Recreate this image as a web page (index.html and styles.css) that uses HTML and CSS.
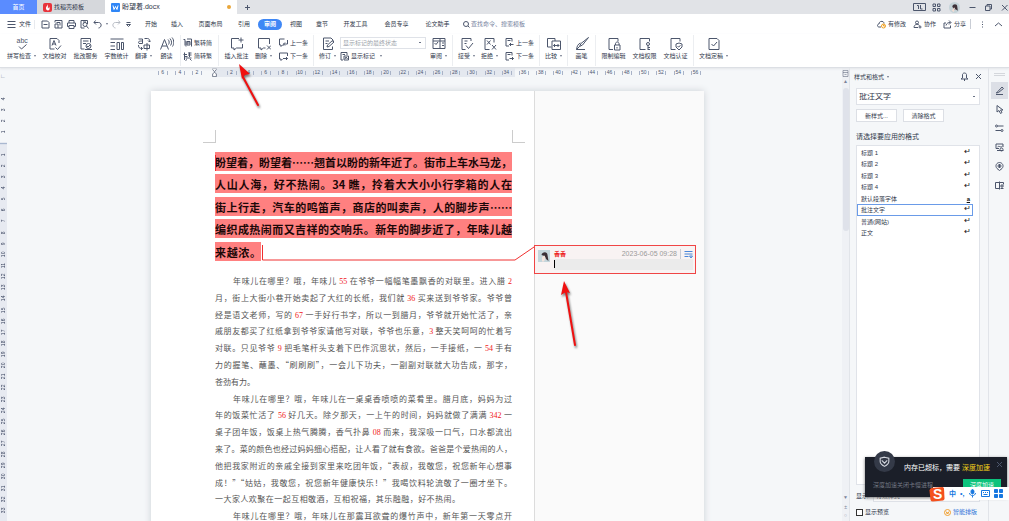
FILE: index.html
```html
<!DOCTYPE html>
<html>
<head>
<meta charset="utf-8">
<title>盼望着.docx</title>
<link rel="stylesheet" href="styles.css">
</head>
<body>
<div class="app">
  <header class="tabs">
    <button class="tab tab-home">首页</button>
    <button class="tab tab-store"><svg class="i9" viewBox="0 0 18 18"><rect width="18" height="18" rx="4" fill="#e8333b"/><path d="M9 2c1 3-2 4-3 7-1 4 2 6 4 6 4-1 4-5 2-8 0 2-1 3-2 4-1-3 1-5-1-9z" fill="#fff"/></svg>找稻壳模板</button>
    <button class="tab tab-doc"><svg class="i9" viewBox="0 0 18 18"><rect width="18" height="18" rx="2" fill="#2f86f6"/><path d="M4 5l2 8 3-6 3 6 2-8" fill="none" stroke="#fff" stroke-width="2"/></svg><span>盼望着.docx</span><i class="dot"></i></button>
    <button class="tab-add" aria-label="新建"><svg class="i7" viewBox="0 0 14 14"><path d="M7 2v10M2 7h10"/></svg></button>
    <div class="win">
      <svg class="i13" viewBox="0 0 26 16"><path d="M1 1h24v14H1zM8 5h3v7M15 4v8h4"/></svg>
      <svg class="i9" viewBox="0 0 18 18"><path d="M2 2h5v5H2zM11 2h5v5h-5zM2 11h5v5H2zM11 11h5v5h-5z"/></svg>
      <svg class="i11" viewBox="0 0 20 20"><circle cx="10" cy="10" r="10" fill="#c5d3d8" stroke="none"/><path d="M6 8c1-5 9-5 9 0l1 8-4-3-3 1z" fill="#3d3038" stroke="none"/><path d="M5 16l4-6 2 1-2 7z" fill="#f2dcd3" stroke="none"/></svg>
      <svg class="i7" viewBox="0 0 14 14"><path d="M1 7h12"/></svg>
      <svg class="i7" viewBox="0 0 14 14"><path d="M1 4h9v9H1zM4 4V1h9v9h-3"/></svg>
      <svg class="i7" viewBox="0 0 14 14"><path d="M2 2l11 11M13 2L2 13"/></svg>
    </div>
  </header>

  <nav class="menu">
    <button class="file"><svg class="i9" viewBox="0 0 18 18"><path d="M1 3h16M1 9h16M1 15h16"/></svg>文件</button>
    <div class="quick">
      <svg class="i9" viewBox="0 0 18 18"><path d="M2 2h11l3 3v11H2zM5 9h8"/></svg>
      <svg class="i9" viewBox="0 0 18 18"><path d="M2 5V1h14v15H8M5 5h7v6M2 8h6v8H2z"/></svg>
      <svg class="i9" viewBox="0 0 18 18"><path d="M4 6V1h10v5M4 13H1V6h16v7h-3M4 11h10v6H4z"/></svg>
      <svg class="i9" viewBox="0 0 18 18"><path d="M15 8V1H2v15h7M6 4h6"/><circle cx="10" cy="9" r="4"/><path d="M13 12l4 5"/></svg>
      <svg class="i9" viewBox="0 0 18 18"><path d="M5 1L2 5l4 4M2 5h9c7 0 7 10 0 11"/></svg><i class="caret"></i>
      <svg class="i9 pale" viewBox="0 0 18 18"><path d="M13 1l3 4-4 4M16 5H7c-7 0-7 10 0 11"/></svg>
      <svg class="i7" viewBox="0 0 14 14"><path d="M3 3h8M3 7h8l-4 4z"/></svg>
    </div>
    <div class="menus">
      <button>开始</button><button>插入</button><button class="w4">页面布局</button><button>引用</button><button class="on">审阅</button><button>视图</button><button>章节</button><button class="w4">开发工具</button><button class="w4">会员专享</button><button class="w4">论文助手</button>
    </div>
    <label class="search"><svg class="i7" viewBox="0 0 14 14"><circle cx="6" cy="6" r="5"/><path d="M10 10l3 3"/></svg><input type="text" placeholder="查找命令、搜索模板" aria-label="查找命令"></label>
    <div class="share">
      <button><svg class="i9" viewBox="0 0 18 18"><path d="M8 14H4c-4 0-4-6 0-6 0-7 10-7 10-1"/><circle cx="13" cy="12" r="4" stroke="#f0a020"/><path d="M13 9v3h3" stroke="#f0a020"/></svg>有修改</button>
      <button><svg class="i9" viewBox="0 0 18 18"><circle cx="8" cy="5" r="3"/><path d="M10 15H2c0-7 8-8 11-4M14 11v6M11 14h6"/></svg>协作</button>
      <button><svg class="i9" viewBox="0 0 18 18"><path d="M6 6H2v10h13v-5M6 11c1-5 5-6 9-6M12 1l4 4-4 4"/></svg>分享</button>
      <i class="bar"></i>
      <svg class="i9" viewBox="0 0 18 18"><path d="M9 3v2M9 8v2M9 13v2"/></svg>
      <svg class="i9" viewBox="0 0 18 18"><path d="M2 12l7-6 7 6"/></svg>
    </div>
  </nav>

  <section class="ribbon">
    <button class="tool xl"><svg viewBox="0 0 28 28"><text x="3" y="12" class="abc">abc</text><path d="M8 19l5 5 10-9"/></svg><span>拼写检查<i class="caret"></i></span></button>
    <button class="tool lg"><svg viewBox="0 0 28 28"><path d="M22 12V7l-4-4H4v21h9M8 17l4-10 4 10M9 14h6M15 21l4 4 7-8"/></svg><span>文档校对</span></button>
    <button class="tool lg"><svg viewBox="0 0 28 28"><path d="M23 11V3H4v21h7M8 8h11M8 13h6"/><circle cx="19" cy="18" r="5"/><path d="M16 18l2 2 4-4M12 25h14"/></svg><span>批改服务</span></button>
    <button class="tool lg"><svg viewBox="0 0 28 28"><path d="M1 4h26M1 11h9M1 18h9M1 25h9M14 11v14M14 11h5v14h-5M23 11v14M23 11h4v14h-4z"/></svg><span>字数统计</span></button>
    <button class="tool md"><svg viewBox="0 0 28 28"><path d="M3 4h8v9H4c-3-5 2-5 7-5M15 3h6c4 0 4 3 4 7M22 7l3 3 3-3M3 16c0 6 2 7 8 7M8 20l3 3-3 3M14 16h11v7H14zM20 12v15"/></svg><span>翻译<i class="caret"></i></span></button>
    <button class="tool md"><svg viewBox="0 0 28 28"><path d="M1 25L9 5l8 20M4 18h10M16 5c3 3 3 7 1 10M20 3c4 5 4 10 1 14M24 1c5 6 4 13 1 18"/></svg><span>朗读</span></button>
    <i class="sep"></i>
    <div class="stack">
      <button><svg class="i9" viewBox="0 0 18 18"><path d="M1 3h3v12M8 2h9v15M6 6v11M8 7h6v7H8zM8 10h6"/></svg>繁转简</button>
      <button><svg class="i9" viewBox="0 0 18 18"><path d="M3 1v15M1 5h7M2 9h7M10 2h7M10 6h7M13 1v9M5 12h12M8 15l-3 2M14 14l3 3"/></svg>简转繁</button>
    </div>
    <i class="sep"></i>
    <button class="tool lg"><svg viewBox="0 0 28 28"><path d="M18 3H3v19h5v4l5-4h12v-8M22 1v10M17 6h10"/></svg><span>插入批注</span></button>
    <button class="tool md"><svg viewBox="0 0 28 28"><path d="M25 14V3H3v19h5v4l5-4h4M20 17l8 8M28 17l-8 8"/></svg><span>删除<i class="caret"></i></span></button>
    <div class="stack">
      <button><svg class="i9" viewBox="0 0 18 18"><path d="M11 2H1v12h3v3l3-3h3M17 4v8H9M12 9l-3 3 3 3"/></svg>上一条</button>
      <button><svg class="i9" viewBox="0 0 18 18"><path d="M17 8V2H1v12h3v3l3-3M8 13h9M14 10l3 3-3 3"/></svg>下一条</button>
    </div>
    <i class="sep"></i>
    <button class="tool md"><svg viewBox="0 0 28 28"><path d="M24 10V6l-4-4H5v23h18v-6M9 8h7M9 13h4M12 20l1-4 10-9 3 3-10 9z"/></svg><span>修订<i class="caret"></i></span></button>
    <div class="stack wide">
      <select aria-label="显示状态"><option>显示标记的最终状态</option></select>
      <button><svg class="i9" viewBox="0 0 18 18"><path d="M14 6V1H2v15h4M5 5h5M8 8h9v8H8zM10 14l2-4 3 4"/></svg>显示标记<i class="caret"></i></button>
    </div>
    <button class="tool md"><svg viewBox="0 0 28 28"><path d="M2 3h24v20H2zM16 3v20M2 8h24M5 12l3 3 4-5M20 12h4M20 17h4"/></svg><span>审阅<i class="caret"></i></span></button>
    <i class="sep"></i>
    <button class="tool md"><svg viewBox="0 0 28 28"><path d="M22 8V3H4v22h7M9 8h6M12 17l5 6 9-11M9 13h4"/></svg><span>接受<i class="caret"></i></span></button>
    <button class="tool md"><svg viewBox="0 0 28 28"><path d="M22 11V3H4v22h9M8 7l7 8M15 7l-7 8M18 16l8 9M26 16l-8 9"/></svg><span>拒绝<i class="caret"></i></span></button>
    <div class="stack">
      <button><svg class="i9" viewBox="0 0 18 18"><path d="M14 7V1H2v15h6M5 5h6M17 13h-8M12 10l-3 3 3 3"/></svg>上一条</button>
      <button><svg class="i9" viewBox="0 0 18 18"><path d="M14 7V1H2v15h6M5 5h6M9 13h8M14 10l3 3-3 3"/></svg>下一条</button>
    </div>
    <i class="sep"></i>
    <button class="tool md"><svg viewBox="0 0 28 28"><path d="M9 20H1V3h15v5M10 8h17v17H10zM13 17h11M16 14l-3 3 3 3M21 14l3 3-3 3"/></svg><span>比较<i class="caret"></i></span></button>
    <i class="sep"></i>
    <button class="tool md"><svg viewBox="0 0 28 28"><path d="M27 1L12 13l-3 6 6-3zM9 19l-6 6h17M11 12c-5 2-7 6-8 13"/></svg><span>画笔</span></button>
    <i class="sep"></i>
    <button class="tool lg"><svg viewBox="0 0 28 28"><path d="M22 9V3H4v22h8M15 16h11v10H15zM17 16v-3c1-4 6-4 7 0v3M20 20v3"/></svg><span>限制编辑</span></button>
    <button class="tool lg"><svg viewBox="0 0 28 28"><path d="M23 9V3H4v22h11"/><circle cx="20" cy="14" r="3"/><path d="M20 17v9M20 21h4M20 25h4"/></svg><span>文档权限</span></button>
    <button class="tool lg"><svg viewBox="0 0 28 28"><path d="M22 9V3H4v22h9M20 12l6 2v6l-6 6-6-6v-6zM17 18l2 2 4-3"/></svg><span>文档认证</span></button>
    <i class="sep"></i>
    <button class="tool xl"><svg viewBox="0 0 28 28"><path d="M4 3h16l4 4v18H4zM9 14l4 4 7-8"/></svg><span>文档定稿<i class="caret"></i></span></button>
  </section>

  <main class="work">
    <div class="vruler">
      <div class="corner">∟</div>
      <div class="vscale"><b>4</b><b>3</b><b>2</b><b>1</b><b class="zero"></b><b>1</b><b>2</b><b>3</b><b>4</b><b>5</b><b>6</b><b>7</b><b>8</b><b>9</b><b>10</b><b>11</b><b>12</b><b>13</b><b>14</b><b>15</b><b>16</b><b>17</b><b>18</b><b>19</b><b>20</b><b>21</b><b>22</b><b>23</b><b>24</b><b>25</b><b>26</b><b>27</b><b>28</b><b>29</b><b>30</b><b>31</b><b>32</b><b>33</b></div>
    </div>
    <div class="canvas">
      <div class="hruler"><div class="hscale"><b>6</b><b>4</b><b>2</b><b class="origin"><svg class="i9" viewBox="0 0 18 24"><path d="M4 1h10v3L9 10 4 4zM9 11l5 5v7H4v-7z" fill="#fff"/></svg></b><b class="in">2</b><b class="in">4</b><b class="in">6</b><b class="in">8</b><b class="in">10</b><b class="in">12</b><b class="in">14</b><b class="in">16</b><b class="in">18</b><b class="in">20</b><b class="in">22</b><b class="in">24</b><b class="in">26</b><b class="in">28</b><b class="in">30</b><b class="in">32</b><b class="in">34</b><b>36</b><b>38</b><b>40</b><b>42</b><b>44</b><b>46</b><b>48</b><b>50</b><b>52</b><b>54</b><b>56</b></div></div>
      <div class="page">
        <article class="sheet">
          <div class="crops"><i></i><i class="r"></i></div>
          <h1 class="lead">
            <span>盼望着，盼望着……翘首以盼的新年近了。街市上车水马龙，</span>
            <span>人山人海，好不热闹。34 瞧，拎着大大小小行李箱的人在</span>
            <span>街上行走，汽车的鸣笛声，商店的叫卖声，人的脚步声……</span>
            <span>编织成热闹而又吉祥的交响乐。新年的脚步近了，年味儿越</span>
            <span class="tail">来越浓。</span>
          </h1>
          <div class="prose">
            <p class="first">年味儿在哪里？哦，年味儿 <em>55</em> 在爷爷一幅幅笔墨飘香的对联里。进入腊 <em>2</em></p>
            <p>月，街上大街小巷开始卖起了大红的长纸，我们就 <em>36</em> 买来送到爷爷家。爷爷曾</p>
            <p>经是语文老师，写的 <em>67</em> 一手好行书字，所以一到腊月，爷爷就开始忙活了，亲</p>
            <p>戚朋友都买了红纸拿到爷爷家请他写对联，爷爷也乐意，<em>3</em> 整天笑呵呵的忙着写</p>
            <p>对联。只见爷爷 <em>9</em> 把毛笔杆头支着下巴作沉思状，然后，一手接纸，一 <em>54</em> 手有</p>
            <p>力的握笔、蘸墨、“刷刷刷”，一会儿下功夫，一副副对联就大功告成，那字，</p>
            <p class="end">苍劲有力。</p>
            <p class="first">年味儿在哪里？哦，年味儿在一桌桌香喷喷的菜肴里。腊月底，妈妈为过</p>
            <p>年的饭菜忙活了 <em>56</em> 好几天。除夕那天，一上午的时间，妈妈就做了满满 <em>342</em> 一</p>
            <p>桌子团年饭，饭桌上热气腾腾，香气扑鼻 <em>08</em> 而来，我深吸一口气，口水都流出</p>
            <p>来了。菜的颜色也经过妈妈细心搭配，让人看了就有食欲。爸爸是个爱热闹的人，</p>
            <p>他把我家附近的亲戚全接到家里来吃团年饭，“表叔，我敬您，祝您新年心想事</p>
            <p>成！”“姑姑，我敬您，祝您新年健康快乐！”我喝饮料轮流敬了一圈才坐下。</p>
            <p class="short">一大家人欢聚在一起互相敬酒，互相祝福，其乐融融，好不热闹。</p>
            <p class="first">年味儿在哪里？哦，年味儿在那震耳欲聋的爆竹声中，新年第一天零点开</p>
          </div>
        </article>
        <aside class="notes">
          <div class="note">
            <svg class="face" viewBox="0 0 24 24"><rect width="24" height="24" fill="#c5d6dc"/><path d="M7 10c1-7 12-8 12 0l2 12-5-4-3-6z" fill="#3b2f36"/><path d="M8 14l5-3 2 5-3 7H8z" fill="#f4e4dd"/></svg>
            <div class="note-main">
              <div class="note-head"><strong>香香</strong><time>2023-06-05 09:28</time><i class="bar"></i><svg class="i9 blue" viewBox="0 0 18 18"><path d="M1 3h16M1 8h16M1 13h8M11 12h6l-3 4z"/></svg></div>
              <input type="text" aria-label="批注内容"><i class="cursor"></i>
            </div>
          </div>
        </aside>
        <svg class="link" viewBox="0 0 553 430"><path d="M64.500 64v16M111.500 154v15H364L383 156" fill="none" stroke="#f03030"/></svg>
      </div>
    </div>
    <div class="scroll">
      <svg class="i7" viewBox="0 0 14 14"><path d="M2 1h10v12H2zM2 5h10M5 8l2 2 2-2"/></svg>
      <span class="up">▲</span><i class="thumb"></i><span class="down">▼</span><span>±</span><span>○</span>
    </div>
    <aside class="panel">
      <div class="panel-head"><span>样式和格式<i class="caret"></i></span><svg class="i9" viewBox="0 0 18 18"><path d="M5 12V5c1-4 7-4 8 0v7l3 2H2l3-2M9 14v4"/></svg><svg class="i7" viewBox="0 0 14 14"><path d="M2 2l10 10M12 2L2 12"/></svg></div>
      <select class="style" aria-label="当前样式"><option>批注文字</option></select>
      <div class="pair"><button>新样式...</button><button>清除格式</button></div>
      <h2>请选择要应用的格式</h2>
      <ul class="list">
        <li>标题 1<b>↵</b></li><li>标题 2<b>↵</b></li><li>标题 3<b>↵</b></li><li>标题 4<b>↵</b></li><li>默认段落字体<b class="char">a</b></li><li class="sel">批注文字<b>↵</b></li><li>普通(网站)<b>↵</b></li><li>正文<b>↵</b></li>
      </ul>
      <div class="show"><label for="show">显示:</label><select id="show"><option>有效样式</option></select></div>
      <div class="preview"><label><input type="checkbox">显示预览</label><a href="#"><svg class="i7" viewBox="0 0 14 14"><circle cx="7" cy="7" r="6" stroke="#f0a030"/><path d="M4 5l3 5 3-5M5 8h4" stroke="#f0a030"/></svg>智能排版</a></div>
    </aside>
    <nav class="rail">
      <i class="grip"></i>
      <button class="on" aria-label="样式"><svg class="i9" viewBox="0 0 18 18"><path d="M3 14L14 2l3 3L7 13l-5 1M2 17h14"/></svg></button>
      <button aria-label="选择"><svg class="i9" viewBox="0 0 18 18"><path d="M4 1v13l4-3 3 6 3-2-3-5h5z"/></svg></button>
      <button aria-label="属性"><svg class="i9" viewBox="0 0 18 18"><circle cx="3" cy="4" r="2"/><path d="M5 4h12M1 13h11"/><circle cx="14" cy="13" r="2"/></svg></button>
      <button aria-label="图形"><svg class="i9" viewBox="0 0 18 18"><path d="M8 11H2V2h14v6M5 8c4-4 6 3 10-2"/><circle cx="13" cy="13" r="3"/><path d="M4 15h13"/></svg></button>
      <button aria-label="定位"><svg class="i9" viewBox="0 0 18 18"><path d="M9 17l-5-4C-1 7 4 1 9 1s10 6 5 12z"/><circle cx="9" cy="8" r="3"/><path d="M9 4v8"/></svg></button>
      <button aria-label="文档"><svg class="i9" viewBox="0 0 18 18"><path d="M9 3H1v12h8M9 1v16M9 3h8v4M11 15h6M12 8h4v4h-4z"/></svg></button>
    </nav>
  </main>

  <div class="toast">
    <span class="badge"><svg viewBox="0 0 24 24"><path d="M12 4l8 2v6c0 4-4 7-8 9-4-2-8-5-8-9V6zM7 10l5 5 5-5" fill="none" stroke="#d5d8df" stroke-width="2"/></svg></span>
    <button class="close" aria-label="关闭"><svg class="i7" viewBox="0 0 14 14"><path d="M2 2l10 10M12 2L2 12"/></svg></button>
    <p class="msg">内存已超标，需要 <em>深度加速</em></p>
    <div class="toast-foot"><span>深度加速关闭卡慢进程</span><button>深度加速</button></div>
  </div>
  <div class="ime">
    <svg class="sogou" viewBox="0 0 32 32"><path d="M5 4l22-2q2 0 3 3l1 20q0 3-3 4L8 31q-4 0-5-3L1 9q0-4 4-5z" fill="#f4511e"/><text x="8" y="26" class="s">S</text></svg>
    <span>中</span><span>•,</span>
    <svg class="i9" viewBox="0 0 18 18"><path d="M9 1c-4 0-4 9 0 9s4-9 0-9z" fill="#1677e0"/><path d="M3 8c1 7 11 7 12 0M9 13v4"/></svg>
    <svg class="i9" viewBox="0 0 18 18"><path d="M1 3h16v12H1zM4 7h2M8 7h2M12 7h2M5 11h8"/></svg>
    <svg class="i9" viewBox="0 0 18 18"><path d="M1 1h6v6H1zM11 1h6v6h-6zM1 11h6v6H1zM11 11h6v6h-6z" fill="#1677e0"/></svg>
  </div>
  <svg class="arrow a1" viewBox="0 0 30 48"><path d="M7 15l15 28" stroke="#f01010" stroke-width="2"/><path d="M3 2l11 10-5 1-3 4z" fill="#f01010"/></svg>
  <svg class="arrow a2" viewBox="0 0 30 72"><path d="M9 12l9 53" stroke="#f01010" stroke-width="2"/><path d="M7 1l6 12-4-1-5 3z" fill="#f01010"/></svg>
</div>
</body>
</html>
```

FILE: styles.css
```css
* { box-sizing: border-box; }
body { margin: 0; font: 6px/8px "Liberation Sans", "Noto Sans CJK SC", sans-serif; color: #2f374a; background: #f5f7f9; }
button, input, select { font: inherit; color: inherit; border: 0; padding: 0; margin: 0; background: none; outline: 0; }
button { white-space: nowrap; }
svg { flex: none; display: block; fill: none; stroke: #4c566c; stroke-width: 2; }
i, em { font-style: normal; }
.i7 { width: 7px; height: 7px; }
.i9 { width: 9px; height: 9px; }
.i11 { width: 11px; height: 11px; }
.i13 { width: 13px; height: 8px; }
.pale { opacity: .4; }
.blue { stroke: #4a86d8; }
.caret { display: inline-block; border: 1px solid transparent; border-top: 2px solid #6b7386; border-bottom: 0; margin-left: 3px; vertical-align: middle; }
.bar { width: 1px; height: 10px; background: #c9cdd5; }
.app { position: relative; height: 100vh; overflow: hidden; display: flex; flex-direction: column; }

.tabs { flex: none; display: flex; height: 14px; background: #e1e3e7; align-items: stretch; }
.tab { display: flex; align-items: center; gap: 2px; }
.tabs .tab svg { stroke: none; }
.tab-home { width: 37px; justify-content: center; background: #5a8cff; color: #fff; }
.tab-store { width: 68px; padding-left: 6px; background: #d6d8dc; }
.tab-doc { width: 132px; padding: 0 6px; background: #fff; font-size: 7px; }
.tabs .tab-doc path { stroke: #fff; }
.dot { width: 4px; height: 4px; margin-left: auto; border-radius: 50%; background: #e9a63a; }
.tab-add { width: 20px; display: flex; align-items: center; justify-content: center; }
.win { margin-left: auto; display: flex; align-items: center; gap: 9px; padding-right: 1px; }
.win .i13 { margin-right: -3px; }
.win .i9 { margin-right: -1px; }

.menu { flex: none; display: flex; align-items: center; height: 20px; background: #fff; }
.file { display: flex; align-items: center; gap: 3px; width: 34px; padding-left: 7px; }
.quick { width: 104px; display: flex; align-items: center; gap: 4px; padding-left: 6px; border-left: 1px solid #e8eaee; }
.quick .caret { margin: 0; }
.menus { display: flex; }
.menus button { width: 26px; height: 11px; }
.menus .w4 { width: 41px; }
.menus .on { width: 24px; margin: 0 1px; border-radius: 6px; background: #3f87f5; color: #fff; font-weight: bold; }
.search { display: flex; align-items: center; gap: 1px; margin-left: 5px; }
.search input { width: 64px; height: 10px; }
.search input::placeholder { color: #76839e; opacity: 1; }
.share { margin-left: auto; display: flex; align-items: center; gap: 7px; padding-right: 6px; }
.share button { display: flex; align-items: center; gap: 2px; }
.share .bar { margin-left: -3px; }

.ribbon { flex: none; display: flex; align-items: flex-start; height: 34px; padding: 1px 4px; background: #fff; border-bottom: 1px solid #dcdfe4; box-shadow: 0 1px 2px #e3e5e9; z-index: 1; }
.tool { flex: none; display: flex; flex-direction: column; align-items: center; gap: 1px; }
.tool svg { width: 14px; height: 14px; margin-top: 2px; }
.md { width: 23px; }
.lg { width: 31px; }
.xl { width: 35px; }
.abc { font-size: 14px; fill: #4c566c; stroke: none; }
.sep { flex: none; width: 1px; height: 31px; margin: 0 2px; background: #eceef1; }
.stack { flex: none; width: 33px; height: 29px; display: flex; flex-direction: column; justify-content: space-evenly; }
.stack button { display: flex; align-items: center; gap: 2px; height: 12px; }
.sep + .stack { width: 33px; }
.tool + .stack { width: 36px; padding-left: 4px; }
.tool + .wide { width: 88px; padding: 0 1px; }
select { appearance: none; border: 1px solid #dfe2e8; background: #fff linear-gradient(#6b7386, #6b7386) right 4px center / 2px 1px no-repeat; padding: 0 2px; }
.wide select { height: 12px; color: #9a9fa9; }

.work { flex: 1; min-height: 0; display: grid; grid-template-columns: 7px 1fr 7px 140px 20px; }
.vruler { overflow: hidden; color: #39435e; background: linear-gradient(#f5f7f9 74px, #e7eaf1 74px); }
.corner { height: 25px; padding-top: 4px; color: #8a92a4; }
.vscale { height: 423px; display: grid; grid-auto-rows: 1fr; }
.vscale b { writing-mode: vertical-rl; transform: rotate(180deg); font: 5px/7px "Liberation Sans", sans-serif; text-align: center; }
.vscale .zero { background: linear-gradient(#9fb0cb, #9fb0cb) center / 100% 1px no-repeat; }
.canvas { min-width: 0; overflow: hidden; display: flex; flex-direction: column; align-items: center; padding-left: 6px; }
.hruler { flex: none; width: 553px; height: 9px; padding-left: 3px; }
.hscale { display: grid; grid-auto-flow: column; grid-auto-columns: 1fr; height: 9px; color: #4c5671; }
.hscale b { font: 5px/8px "Liberation Sans", sans-serif; text-align: center; background: linear-gradient(#a9b3c8, #a9b3c8) 4px 3px / 1px 4px no-repeat, linear-gradient(#a9b3c8, #a9b3c8) 13px 3px / 1px 4px no-repeat; }
.hscale .in { background-color: #e4e8ef; }
.hscale .origin { background: linear-gradient(90deg, #f5f7f9 50%, #e4e8ef 50%); padding-left: 4px; }
.page { position: relative; flex: none; width: 553px; height: 600px; margin-top: 14px; display: flex; background: #fff; box-shadow: 0 0 7px #ccd0d5; }
.sheet { flex: 1; padding: 39px 9px 0 52px; }
.crops { display: flex; justify-content: space-between; height: 22px; }
.crops i { width: 13px; height: 13px; border: solid #ccc; border-width: 0 1px 1px 0; }
.crops .r { border-width: 0 0 1px 1px; }
.lead { margin: 0 13px 0 12px; height: 112px; display: grid; grid-template-rows: repeat(5, 1fr); font: bold 11px/20px "Noto Sans CJK SC", sans-serif; color: #1c0808; }
.lead span { height: 19px; background: #ff8080; white-space: nowrap; text-align-last: justify; }
.lead .tail { width: 46px; }
.prose { margin: 9px 13px 0 12px; height: 252px; display: grid; grid-template-rows: repeat(15, 1fr); font: 8px/16px "Noto Sans CJK SC", sans-serif; color: #555; }
.prose p { margin: 0; white-space: nowrap; text-align-last: justify; }
.prose .first { padding-left: 18px; }
.prose .end { text-align-last: left; }
.prose .short { padding-right: 52px; }
.prose em { color: #f01818; line-height: 8px; font-family: "Liberation Serif", serif; }
.notes { width: 170px; padding: 154px 8px 0 0; background: #fafafa; border-left: 1px solid #dcdcdc; }
.note { display: flex; gap: 4px; height: 29px; margin-left: -1px; padding: 4px 2px 3px 3px; border: 1px solid #f04545; background: #f8f3f3; }
.face { width: 12px; height: 12px; stroke: none; }
.note-main { flex: 1; min-width: 0; position: relative; }
.note-head { display: flex; align-items: center; gap: 3px; height: 8px; }
.note-head strong { color: #ee1c1c; margin-right: auto; }
.note-head time { color: #9a9a9a; font-size: 7px; }
.note-main input { display: block; width: 100%; height: 11px; margin-top: 1px; background: #ebebeb; }
.cursor { position: absolute; left: 0; bottom: 2px; width: 1px; height: 8px; background: #000; }
.link { position: absolute; left: 0; top: 0; width: 553px; height: 430px; stroke-width: 1; }

.scroll { display: flex; flex-direction: column; align-items: center; background: #eff1f5; color: #7b849a; font-size: 5px; padding: 2px 0; }
.scroll svg { stroke-width: 1; }
.thumb { width: 6px; height: 143px; margin: 3px 0 auto; border-radius: 3px; background: #dfe2ea; }
.scroll span { height: 8px; }
.scroll .down { height: 10px; }
.panel { display: flex; flex-direction: column; min-height: 0; padding: 4px 8px 4px 6px; border-left: 1px solid #e1e4e9; border-right: 1px solid #e1e4e9; }
.panel-head { display: flex; align-items: center; gap: 6px; height: 9px; margin: 0 -2px; }
.panel-head span { margin-right: auto; }
.style { flex: none; height: 17px; margin-top: 7px; font-size: 8px; }
.pair { display: flex; gap: 6px; margin-top: 4px; }
.pair button { width: 41px; height: 13px; background: #fff; border: 1px solid #dcdfe5; }
.panel h2 { margin: 10px 0 4px; font: 7px/9px "Liberation Sans", "Noto Sans CJK SC", sans-serif; }
.list { flex: 1; min-height: 0; margin: 0; padding: 1px 6px 0 0; list-style: none; background: #fff; border: 1px solid #e0e3e9; }
.list li { display: flex; justify-content: space-between; height: 12px; margin-bottom: -1px; padding: 0 1px 0 3px; line-height: 10px; border: 1px solid transparent; }
.list li:nth-child(even) { margin-bottom: 0; }
.list b { font: 8px/8px "DejaVu Sans", sans-serif; color: #111; }
.list .char { padding-right: 1px; font: bold 6px/10px "Liberation Sans", sans-serif; text-decoration: underline; }
.list .sel { border-color: #6a9be8; }
.show { display: flex; align-items: center; gap: 3px; height: 13px; margin-top: 4px; }
.show select { flex: 1; height: 12px; }
.preview { display: flex; align-items: center; justify-content: space-between; height: 10px; margin: 5px 3px 0 0; }
.preview label, .preview a { display: flex; align-items: center; gap: 2px; }
.preview input { appearance: none; width: 7px; height: 7px; border: 1px solid #333; background: #fff; }
.preview a { color: #2f74d8; text-decoration: none; }
.rail { display: flex; flex-direction: column; align-items: center; gap: 2px; }
.grip { width: 11px; height: 3px; margin: 5px 0 4px; border: solid #d4d7dc; border-width: 1px 0; }
.rail button { width: 17px; height: 17px; display: flex; align-items: center; justify-content: center; }
.rail .on { background: #dcdfe6; }

.toast { position: absolute; right: 2px; bottom: 24px; width: 142px; height: 40px; background: #1b1f29; color: #fff; box-shadow: 0 1px 3px #777; }
.badge { position: absolute; left: 9px; top: -6px; width: 21px; height: 21px; padding: 4px; border-radius: 50%; background: #343a48; }
.close { position: absolute; right: 4px; top: 4px; }
.msg { margin: 6px 0 0 39px; font-size: 7px; line-height: 10px; white-space: nowrap; }
.msg em { color: #f3d21b; }
.toast-foot { display: flex; justify-content: space-between; align-items: center; margin: 6px 6px 0 8px; color: #737783; }
.toast-foot button { width: 38px; height: 11px; background: #0cc37c; color: #fff; }
.ime { position: absolute; right: 0; bottom: 21px; width: 76px; height: 13px; display: flex; align-items: center; gap: 4px; padding-right: 1px; background: #fff; color: #1677e0; font: bold 7px/10px "Liberation Sans", "Noto Sans CJK SC", sans-serif; }
.ime svg { stroke: #1677e0; }
.ime .sogou { width: 16px; height: 16px; margin-left: -4px; stroke: none; }
.s { font: bold 28px "Liberation Sans", sans-serif; fill: #fff; }
.arrow { position: absolute; filter: drop-shadow(1px 2px 1px #777); }
.arrow path { stroke-linecap: round; }
.a1 { left: 236px; top: 62px; width: 30px; height: 48px; z-index: 2; }
.a2 { left: 557px; top: 280px; width: 30px; height: 72px; }
.arrow path + path { stroke: none; }
```
